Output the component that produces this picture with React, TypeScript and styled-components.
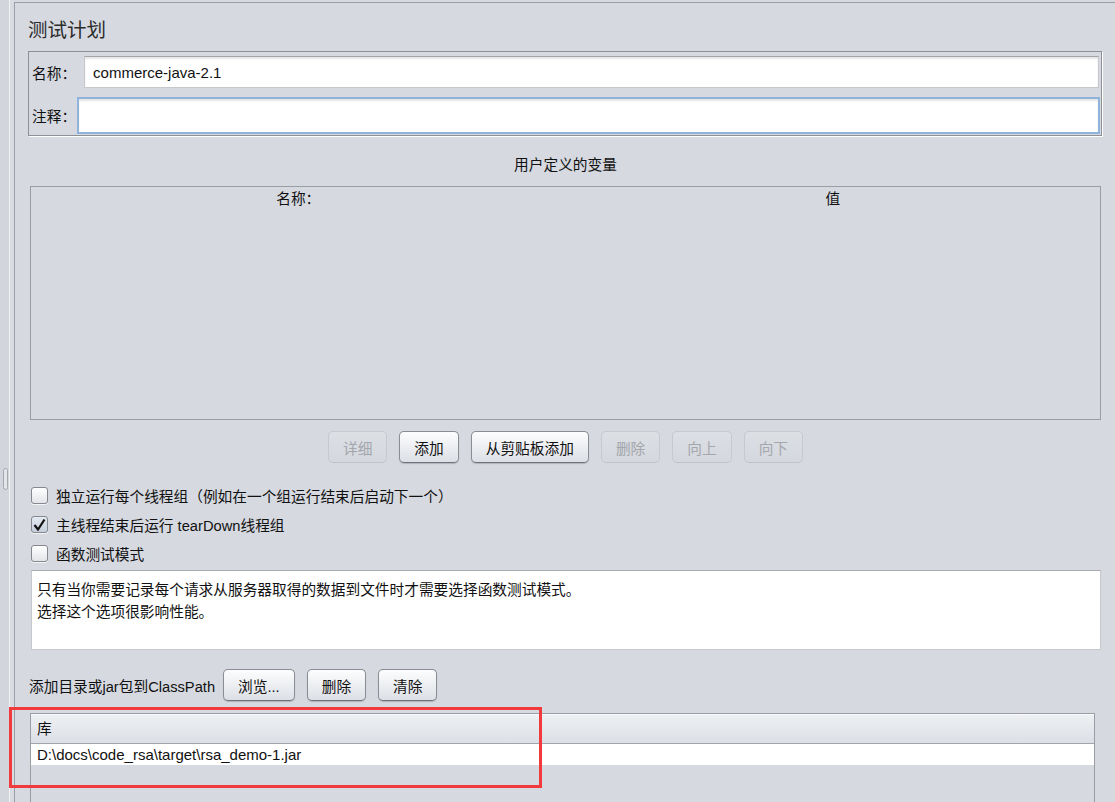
import React from "react";
import styled, { createGlobalStyle } from "styled-components";

const FONT = `"Liberation Sans", "Noto Sans CJK SC", sans-serif`;

const Global = createGlobalStyle`
  html, body { margin: 0; padding: 0; background: #d6d9e0; }
  body { font-family: ${FONT}; font-size: 14.7px; color: #111; overflow: hidden; }
  * { box-sizing: border-box; }
`;

const Page = styled.div`
  display: flex;
  width: 1115px;
  height: 802px;
  overflow: hidden;
  background: #d6d9e0;
`;

const Splitter = styled.div`
  width: 14px;
  flex: none;
  background: linear-gradient(to right, #d2d5db 0 9px, #f1f2f4 9px 10px, #d8dbe1 10px 14px);
`;

const Grip = styled.div`
  margin: 468px 0 0 3px;
  width: 5px;
  height: 22px;
  border: 1px solid #a4a7ad;
  border-radius: 3px;
  background: #e3e5e9;
`;

const Main = styled.div`
  flex: 1;
  margin-top: 2px;
  border-top: 1px solid #9b9ea5;
  border-left: 1px solid #9b9ea5;
  padding: 15px 13px 0 13px;
  display: flex;
  flex-direction: column;
  min-width: 0;
`;

const Title = styled.div`
  font-size: 19.5px;
  line-height: 24px;
  height: 24px;
  color: #2c2c2c;
`;

const NameBox = styled.div`
  margin-top: 9px;
  border: 1px solid #8d9096;
  box-shadow: 1px 1px 0 #ffffff;
  padding: 4px 2px 1px 3px;
  display: flex;
  flex-direction: column;
  gap: 9px;
`;

const FieldRow = styled.div`
  display: flex;
  align-items: center;
`;

const FieldLabel = styled.span`
  flex: none;
  white-space: nowrap;
  font-family: "Noto Sans CJK SC", sans-serif;
`;

const TextInput = styled.input<{ $offset: number; $focused?: boolean }>`
  flex: 1;
  min-width: 0;
  margin-left: ${(p) => p.$offset}px;
  margin-right: ${(p) => (p.$focused ? -1 : 0)}px;
  height: ${(p) => (p.$focused ? 37 : 32)}px;
  background: #ffffff;
  border: ${(p) => (p.$focused ? "2px solid #8fb3db" : "1px solid #c6c8cc")};
  border-top-color: ${(p) => (p.$focused ? "#8fb3db" : "#a2a4a9")};
  box-shadow: inset 0 2px 2px rgba(0, 0, 0, 0.1);
  font-family: ${FONT};
  font-size: 15px;
  color: #111;
  padding: 0 8px;
  outline: none;
`;

const SectionTitle = styled.div`
  margin-top: 19px;
  height: 20px;
  line-height: 20px;
  text-align: center;
  margin-left: 2px;
  margin-right: 1px;
`;

const VarTable = styled.div`
  margin: 11px 1px 0 2px;
  height: 234px;
  border: 1px solid #9a9da3;
`;

const VarHeader = styled.div`
  display: grid;
  grid-template-columns: 1fr 1fr;
  height: 22px;
  line-height: 22px;
  text-align: center;
  font-family: "Noto Sans CJK SC", sans-serif;
`;

const ButtonRow = styled.div`
  margin: 11px 1px 0 2px;
  display: flex;
  justify-content: center;
  gap: 12px;
`;

const Button = styled.button<{ disabled?: boolean }>`
  height: 32px;
  padding: 0 14px;
  border-radius: 5px;
  font-family: ${FONT};
  font-size: 14.7px;
  white-space: nowrap;
  cursor: default;
  border: 1px solid ${(p) => (p.disabled ? "#c6c9cf" : "#8a8d93")};
  border-bottom-color: ${(p) => (p.disabled ? "#c0c3c9" : "#6e7177")};
  color: ${(p) => (p.disabled ? "#a3a6ac" : "#111111")};
  background: ${(p) =>
    p.disabled
      ? "linear-gradient(#dcdfe4, #d4d7dd)"
      : "linear-gradient(#fdfdfe 0%, #eef0f3 45%, #dcdfe5 100%)"};
  box-shadow: ${(p) => (p.disabled ? "none" : "0 1px 1px rgba(0,0,0,0.18)")};
`;

const CheckList = styled.div`
  margin-top: 18px;
  padding-left: 3px;
  display: flex;
  flex-direction: column;
`;

const CheckRow = styled.label`
  height: 29px;
  display: flex;
  align-items: center;
  gap: 8px;
`;

const CheckBox = styled.span<{ $checked?: boolean }>`
  width: 17px;
  height: 17px;
  flex: none;
  border: 1px solid #85888e;
  border-radius: 3px;
  display: flex;
  align-items: center;
  justify-content: center;
  background: ${(p) =>
    p.$checked ? "linear-gradient(#e4eaf2, #c5cfdc)" : "linear-gradient(#ffffff, #e2e4e8)"};
  box-shadow: 0 1px 0 rgba(255, 255, 255, 0.7);
`;

const TextArea = styled.div`
  margin: 2px 1px 0 3px;
  height: 80px;
  background: #ffffff;
  border: 1px solid #c6c8cc;
  border-top-color: #a8aaae;
  padding: 8px 5px;
  line-height: 22px;
`;

const ClassPathRow = styled.div`
  margin: 19px 0 0 1px;
  display: flex;
  align-items: center;
  gap: 12px;
`;

const ClassPathLabel = styled.span`
  margin-right: -4px;
  white-space: nowrap;
`;

const LibrarySection = styled.div`
  position: relative;
  flex: 1;
  margin: 12px 7px 0 2px;
  border: 1px solid #9a9da3;
  border-bottom: none;
  display: flex;
  flex-direction: column;
`;

const LibHeader = styled.div`
  height: 30px;
  line-height: 28px;
  padding-left: 6px;
  border-top: 1px solid #fafbfc;
  border-bottom: 1px solid #a2a5ab;
  background: linear-gradient(#eef0f3, #dcdfe5);
`;

const LibRow = styled.div`
  height: 21px;
  line-height: 21px;
  padding-left: 6px;
  background: #ffffff;
  font-size: 15px;
`;

const Highlight = styled.div`
  position: absolute;
  left: -22px;
  top: -7px;
  width: 533px;
  height: 81px;
  border: 3px solid #f23a3c;
  pointer-events: none;
`;

const CheckMark = () => (
  <svg width="13" height="13" viewBox="0 0 13 13">
    <path d="M1.5 7 L5 11.5 L11.5 1.5" fill="none" stroke="#111" strokeWidth="2.2" strokeLinejoin="miter" />
  </svg>
);

export default function App() {
  return (
    <>
      <Global />
      <Page>
        <Splitter>
          <Grip />
        </Splitter>
        <Main>
          <Title>测试计划</Title>
          <NameBox>
            <FieldRow>
              <FieldLabel>名称：</FieldLabel>
              <TextInput $offset={8} value="commerce-java-2.1" readOnly />
            </FieldRow>
            <FieldRow>
              <FieldLabel>注释：</FieldLabel>
              <TextInput $offset={1} $focused value="" readOnly />
            </FieldRow>
          </NameBox>

          <SectionTitle>用户定义的变量</SectionTitle>
          <VarTable>
            <VarHeader>
              <span>名称：</span>
              <span>值</span>
            </VarHeader>
          </VarTable>

          <ButtonRow>
            <Button disabled>详细</Button>
            <Button>添加</Button>
            <Button>从剪贴板添加</Button>
            <Button disabled>删除</Button>
            <Button disabled>向上</Button>
            <Button disabled>向下</Button>
          </ButtonRow>

          <CheckList>
            <CheckRow>
              <CheckBox />
              独立运行每个线程组（例如在一个组运行结束后启动下一个）
            </CheckRow>
            <CheckRow>
              <CheckBox $checked>
                <CheckMark />
              </CheckBox>
              主线程结束后运行 tearDown线程组
            </CheckRow>
            <CheckRow>
              <CheckBox />
              函数测试模式
            </CheckRow>
          </CheckList>

          <TextArea>
            只有当你需要记录每个请求从服务器取得的数据到文件时才需要选择函数测试模式。
            <br />
            选择这个选项很影响性能。
          </TextArea>

          <ClassPathRow>
            <ClassPathLabel>添加目录或jar包到ClassPath</ClassPathLabel>
            <Button>浏览...</Button>
            <Button>删除</Button>
            <Button>清除</Button>
          </ClassPathRow>

          <LibrarySection>
            <LibHeader>库</LibHeader>
            <LibRow>D:\docs\code_rsa\target\rsa_demo-1.jar</LibRow>
            <Highlight />
          </LibrarySection>
        </Main>
      </Page>
    </>
  );
}
